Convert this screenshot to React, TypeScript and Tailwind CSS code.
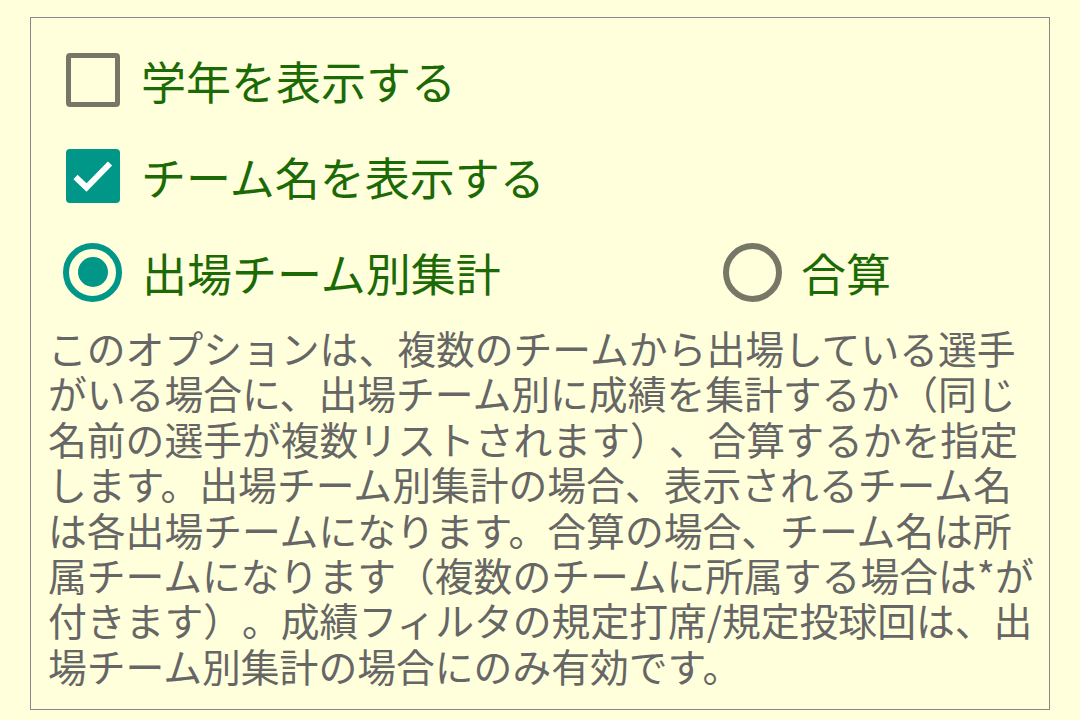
import React from 'react';

const FONT = { fontFamily: '"Noto Sans CJK JP", "Noto Sans", sans-serif' };

// Option panel: two checkboxes, a radio pair and an explanatory note
const Checkbox: React.FC<{ checked: boolean }> = ({ checked }) =>
  checked ? (
    <div className="w-[54px] h-[54px] rounded-[4px] bg-[#009688] shrink-0">
      <svg width="54" height="54" viewBox="0 0 54 54">
        <polyline
          points="9.5,28 20.5,38.5 44,14.5"
          fill="none"
          stroke="#ffffff"
          strokeWidth="6"
        />
      </svg>
    </div>
  ) : (
    <div className="w-[54px] h-[54px] rounded-[4px] border-[5px] border-[#777768] shrink-0" />
  );

const Radio: React.FC<{ checked: boolean }> = ({ checked }) => (
  <div
    className={`w-[59px] h-[59px] rounded-full border-[6px] flex items-center justify-center shrink-0 ${
      checked ? 'border-[#009688]' : 'border-[#777768]'
    }`}
  >
    {checked && <div className="w-[30px] h-[30px] rounded-full bg-[#009688]" />}
  </div>
);

export default function App() {
  return (
    <div className="w-[1080px] h-[720px] bg-[#ffffdc] pt-[17px] pl-[30px]" style={FONT}>
      <div className="w-[1020px] h-[693px] border border-[#888888] pt-[14px]">
        {/* Checkboxes */}
        <div className="h-[96px] flex items-center pl-[35px] gap-[21px]">
          <Checkbox checked={false} />
          <span className="text-[45px] leading-none text-[#1c6a06]">学年を表示する</span>
        </div>
        <div className="h-[96px] flex items-center pl-[35px] gap-[21px]">
          <Checkbox checked={true} />
          <span className="text-[45px] leading-none text-[#1c6a06]">チーム名を表示する</span>
        </div>

        {/* Aggregation mode */}
        <div className="h-[96px] flex items-center pl-[32px]">
          <div className="w-[660px] flex items-center gap-[20px]">
            <Radio checked={true} />
            <span className="text-[45px] leading-none text-[#1c6a06]">出場チーム別集計</span>
          </div>
          <div className="flex items-center gap-[19px]">
            <Radio checked={false} />
            <span className="text-[45px] leading-none text-[#1c6a06]">合算</span>
          </div>
        </div>

        {/* Description */}
        <p className="mt-[5px] ml-[17px] w-[1000px] text-[38.8px] leading-[45.4px] text-[#666666] [text-spacing-trim:space-all]">
          このオプションは、複数のチームから出場している選手がいる場合に、出場チーム別に成績を集計するか（同じ名前の選手が複数リストされます）、合算するかを指定します。出場チーム別集計の場合、表示されるチーム名は各出場チームになります。合算の場合、チーム名は所属チームになります（複数のチームに所属する場合は*が付きます）。成績フィルタの規定打席/規定投球回は、出場チーム別集計の場合にのみ有効です。
        </p>
      </div>
    </div>
  );
}
